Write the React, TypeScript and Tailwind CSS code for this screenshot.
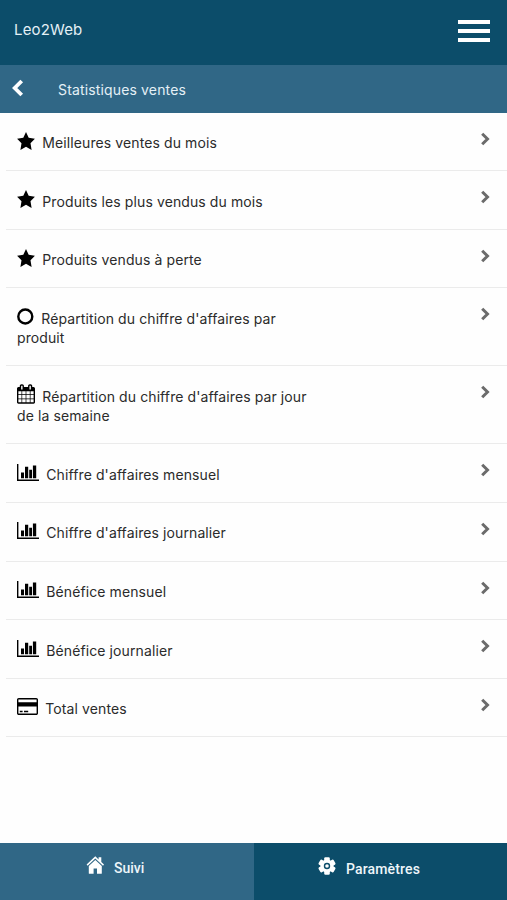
import type { ReactNode } from 'react';

type IconName = 'star' | 'circle' | 'calendar' | 'chart' | 'card';

interface MenuItem {
  icon: IconName;
  lines: string[];
}

const items: MenuItem[] = [
  { icon: 'star', lines: ['Meilleures ventes du mois'] },
  { icon: 'star', lines: ['Produits les plus vendus du mois'] },
  { icon: 'star', lines: ['Produits vendus à perte'] },
  { icon: 'circle', lines: ["Répartition du chiffre d'affaires par", 'produit'] },
  { icon: 'calendar', lines: ["Répartition du chiffre d'affaires par jour", 'de la semaine'] },
  { icon: 'chart', lines: ["Chiffre d'affaires mensuel"] },
  { icon: 'chart', lines: ["Chiffre d'affaires journalier"] },
  { icon: 'chart', lines: ['Bénéfice mensuel'] },
  { icon: 'chart', lines: ['Bénéfice journalier'] },
  { icon: 'card', lines: ['Total ventes'] },
];

const icons: Record<IconName, ReactNode> = {
  star: (
    <svg className="h-[18px] w-[18px]" viewBox="0 0 18 17" preserveAspectRatio="none" fill="currentColor">
      <path d="M9 0l2.700 5.500 6.200.9-4.400 4.300 1.100 6.200L9 14l-5.600 2.900 1.100-6.200L.1 6.400l6.200-.9z" />
    </svg>
  ),
  circle: (
    <svg className="h-[17px] w-[17px]" viewBox="0 0 17 17" fill="none" stroke="currentColor" strokeWidth="2.400">
      <circle cx="8.300" cy="8.500" r="7" />
    </svg>
  ),
  calendar: (
    <svg className="h-[20px] w-[18px]" viewBox="0 0 1664 1792" fill="currentColor">
      <path d="M128 1664h288v-288h-288v288zm352 0h320v-288h-320v288zm-352-352h288v-320h-288v320zm352 0h320v-320h-320v320zm-352-384h288v-288h-288v288zm736 736h320v-288h-320v288zm-384-736h320v-288h-320v288zm768 736h288v-288h-288v288zm-384-352h320v-320h-320v320zm-352-864v-288q0-13-9.500-22.500t-22.500-9.500h-64q-13 0-22.500 9.500t-9.500 22.500v288q0 13 9.500 22.500t22.500 9.500h64q13 0 22.500-9.500t9.500-22.500zm736 864h288v-320h-288v320zm-384-384h320v-288h-320v288zm384 0h288v-288h-288v288zm32-480v-288q0-13-9.500-22.500t-22.500-9.500h-64q-13 0-22.500 9.500t-9.500 22.500v288q0 13 9.500 22.500t22.500 9.500h64q13 0 22.500-9.500t9.500-22.500zm384-64v1280q0 52-38 90t-90 38h-1408q-52 0-90-38t-38-90v-1280q0-52 38-90t90-38h128v-96q0-66 47-113t113-47h64q66 0 113 47t47 113v96h384v-96q0-66 47-113t113-47h64q66 0 113 47t47 113v96h128q52 0 90 38t38 90z" />
    </svg>
  ),
  chart: (
    <svg className="h-[17px] w-[22px]" viewBox="0 0 22 17" fill="currentColor">
      <path d="M0 0h1.400v15.600H22V17H0zM4 8.500h3v5.700H4zM8 2.700h3.200v11.500H8zM12.200 5.700H15v8.500h-2.800zM15.900 1.500h3.300v12.700h-3.300z" />
    </svg>
  ),
  card: (
    <svg className="h-[17px] w-[21px]" viewBox="0 128 1920 1536" preserveAspectRatio="none" fill="currentColor">
      <path d="M1760 128q66 0 113 47t47 113v1216q0 66-47 113t-113 47h-1600q-66 0-113-47t-47-113v-1216q0-66 47-113t113-47h1600zm-1600 128q-13 0-22.500 9.500t-9.500 22.500v224h1664v-224q0-13-9.500-22.500t-22.500-9.500h-1600zm1600 1280q13 0 22.500-9.500t9.500-22.500v-608h-1664v608q0 13 9.500 22.500t22.500 9.500h1600zm-1504-128v-128h256v128h-256zm384 0v-128h384v128h-384z" />
    </svg>
  ),
};

function MenuRow({ item }: { item: MenuItem }) {
  const [first, ...rest] = item.lines;

  return (
    <li className="ml-[6px] flex items-start justify-between border-b border-[#ebebeb] pt-[19px] pr-[16px] pb-[18.200px] pl-[11px]">
      <div className="text-[14px] leading-[19.500px] tracking-[0.100px] whitespace-nowrap text-[#2b2b2b]">
        <div className="flex h-[20.400px] items-start gap-[7.300px]">
          <span className="flex h-[18px] items-center text-black">{icons[item.icon]}</span>
          <span className="pt-[1.500px]">{first}</span>
        </div>
        {rest.map((line) => (
          <div key={line}>{line}</div>
        ))}
      </div>
      <svg className="h-[14px] w-[12px]" viewBox="0 0 12 14" fill="none" stroke="#6b6b6b" strokeWidth="3">
        <path d="M3.200 1.700L8.500 7l-5.300 5.300" />
      </svg>
    </li>
  );
}

export default function App() {
  return (
    <div className="flex h-[900px] w-full flex-col bg-[#fefefe] font-['Inter','Liberation_Sans',sans-serif]">
      <header className="flex h-[65px] shrink-0 items-start justify-between bg-[#0c4d6a] pr-[17px] pl-[14px] text-white">
        <h1 className="mt-[19px] text-[15px] leading-[21px] tracking-[0.150px] text-[#e4f0f6]">Leo2Web</h1>
        <button type="button" aria-label="Menu" className="mt-[20px] flex w-[32px] flex-col gap-[5px]">
          <span className="h-[4px] w-full bg-white" />
          <span className="h-[4px] w-full bg-white" />
          <span className="h-[4px] w-full bg-white" />
        </button>
      </header>

      {/* Section title with back arrow */}
      <div className="flex h-[47.500px] shrink-0 items-start bg-[#306786] pl-[11px] text-[#e4f0f6]">
        <svg className="mt-[14px] h-[18px] w-[13px]" viewBox="0 0 13 18" fill="none" stroke="white" strokeWidth="3.800">
          <path d="M10.700 2L3.700 9l7 7" />
        </svg>
        <h2 className="mt-[15px] ml-[34px] text-[14px] leading-[20px] tracking-[0.150px]">Statistiques ventes</h2>
      </div>

      <ul className="flex-1">
        {items.map((item) => (
          <MenuRow key={item.lines[0]} item={item} />
        ))}
      </ul>

      <nav className="flex h-[57px] shrink-0 font-['Roboto','Liberation_Sans',sans-serif] text-[14px] leading-[20px] font-medium text-[#eef6fa]">
        <a className="flex w-[254px] items-start bg-[#306786] pl-[86px]">
          <svg className="mt-[13px] h-[18px] w-[18px]" viewBox="0 0 18 18" fill="white">
            <path d="M9.300.3l3.300 3.100V1.200h2.700v4.900l2.700 2.500-1 1.200-7.700-7.200-7.700 7.200-1-1.200z" />
            <path d="M9.300 3.900l6.500 6.100v7.200q0 .5-.5.5h-4.300v-5.200H7.600v5.200H3.300q-.5 0-.5-.5V10z" />
          </svg>
          <span className="mt-[15px] ml-[10px]">Suivi</span>
        </a>
        <a className="flex flex-1 items-start bg-[#0c4d6a] pl-[64px]">
          <svg className="mt-[14px] h-[18px] w-[18px]" viewBox="0 0 18 18" fill="white">
            <circle cx="9" cy="9" r="6.500" />
            {/* Each bar gives two opposite teeth */}
            <rect x="6.200" y=".3" width="5.600" height="17.400" rx="1.200" />
            <rect x="6.200" y=".3" width="5.600" height="17.400" rx="1.200" transform="rotate(60 9 9)" />
            <rect x="6.200" y=".3" width="5.600" height="17.400" rx="1.200" transform="rotate(120 9 9)" />
            <circle cx="9" cy="9" r="2.500" fill="none" stroke="#0c4d6a" strokeWidth="1.400" />
          </svg>
          <span className="mt-[16px] ml-[10px] tracking-[0.150px]">Paramètres</span>
        </a>
      </nav>
    </div>
  );
}
